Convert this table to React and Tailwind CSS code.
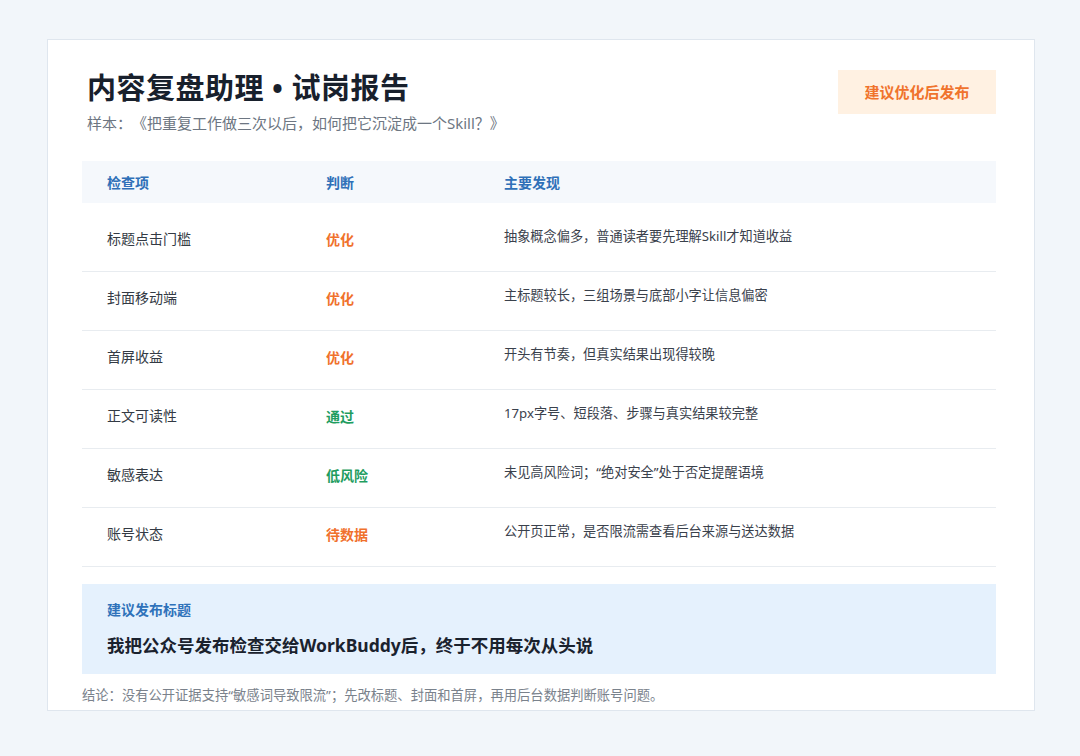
const rows = [
  { item: '标题点击门槛', verdict: '优化', tone: 'orange', note: '抽象概念偏多，普通读者要先理解Skill才知道收益' },
  { item: '封面移动端', verdict: '优化', tone: 'orange', note: '主标题较长，三组场景与底部小字让信息偏密' },
  { item: '首屏收益', verdict: '优化', tone: 'orange', note: '开头有节奏，但真实结果出现得较晚' },
  { item: '正文可读性', verdict: '通过', tone: 'green', note: '17px字号、短段落、步骤与真实结果较完整' },
  { item: '敏感表达', verdict: '低风险', tone: 'green', note: '未见高风险词；“绝对安全”处于否定提醒语境' },
  { item: '账号状态', verdict: '待数据', tone: 'orange', note: '公开页正常，是否限流需查看后台来源与送达数据' },
]

export default function App() {
  return (
    <div
      className="min-h-[756px] w-[1080px] bg-[#f2f6fa] pt-[39px] [text-spacing-trim:space-all]"
      style={{ fontFamily: '"Noto Sans", "Noto Sans CJK SC", sans-serif' }}
    >
      <div className="ml-[47px] w-[988px] h-[672px] bg-white border border-[#dfe6ee] pl-[34px] pr-[38px] pt-[28px]">
        <div className="flex items-start justify-between">
          <div className="pl-[5px]">
            <h1 className="text-[29px] leading-[40px] font-bold text-[#18202c] tracking-[0.5px]">内容复盘助理 • 试岗报告</h1>
            <p className="mt-[5px] text-[15px] leading-[20px] text-[#6d7682]">样本：《把重复工作做三次以后，如何把它沉淀成一个Skill？》</p>
          </div>
          <div className="mt-[2px] w-[158px] h-[44px] bg-[#fff1e2] flex items-center justify-center text-[15px] font-bold text-[#f0732c]">
            建议优化后发布
          </div>
        </div>

        <div className="mt-[28px]">
          <div className="flex h-[42px] items-center bg-[#f5f8fc] text-[14px] font-bold text-[#2f70b8]">
            <div className="w-[219px] pl-[25px]">检查项</div>
            <div className="w-[178px] pl-[25px]">判断</div>
            <div className="flex-1 pl-[25px]">主要发现</div>
          </div>
          <div className="mt-[10px]">
            {rows.map((r) => (
              <div key={r.item} className="flex h-[59px] border-b border-[#e8ecf0]">
                <div className="w-[219px] pl-[25px] pt-[17px] text-[14px] leading-[18px] text-[#333a44]">{r.item}</div>
                <div
                  className={`w-[178px] pl-[25px] pt-[18px] text-[14px] leading-[18px] font-bold ${
                    r.tone === 'green' ? 'text-[#1f9d5f]' : 'text-[#f0712c]'
                  }`}
                >
                  {r.verdict}
                </div>
                <div className="flex-1 pl-[25px] pt-[14px] text-[13.2px] leading-[18px] text-[#3a414c]">{r.note}</div>
              </div>
            ))}
          </div>
        </div>

        <div className="mt-[17px] h-[90px] bg-[#e5f1fd] px-[25px] pt-[16px]">
          <div className="text-[14px] leading-[20px] font-bold text-[#2f72ba]">建议发布标题</div>
          <div className="mt-[14px] text-[17.5px] leading-[22px] font-bold text-[#1a222e]">我把公众号发布检查交给WorkBuddy后，终于不用每次从头说</div>
        </div>

        <p className="mt-[12px] text-[13.3px] leading-[18px] text-[#7a828c]">
          结论：没有公开证据支持“敏感词导致限流”；先改标题、封面和首屏，再用后台数据判断账号问题。
        </p>
      </div>
    </div>
  )
}
